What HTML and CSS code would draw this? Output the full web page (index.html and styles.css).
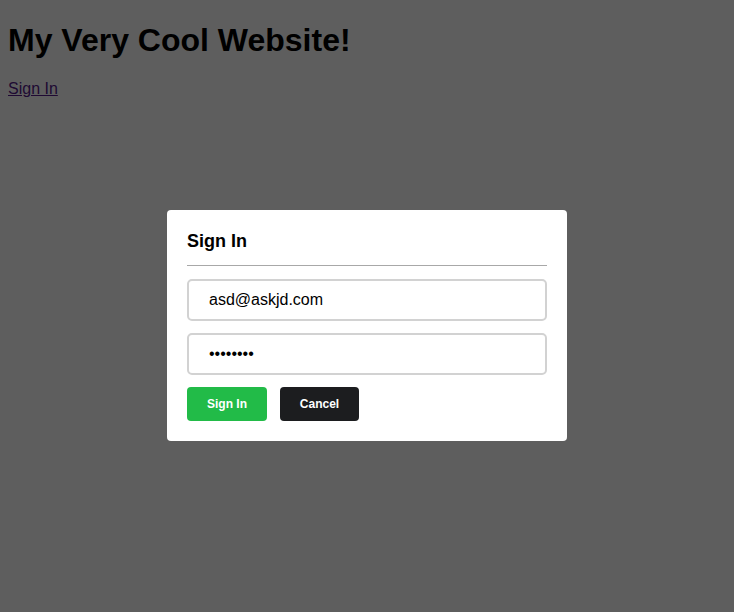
FILE: index.html
```html
<!DOCTYPE html>
<html>
<head>
<meta charset="utf-8">
<link rel="stylesheet" href="styles.css">
</head>
<body>
<h1 class="site-title">My Very Cool Website!</h1>
<p class="nav"><a class="signin-link" href="#">Sign In</a></p>
<div class="overlay">
  <div class="modal">
    <h2 class="modal-title">Sign In</h2>
    <hr class="divider">
    <form class="form">
      <input class="field" type="email" value="asd@askjd.com">
      <input class="field" type="password" value="password">
      <div class="actions">
        <button type="button" class="btn btn-primary">Sign In</button>
        <button type="button" class="btn btn-dark">Cancel</button>
      </div>
    </form>
  </div>
</div>
</body>
</html>
```

FILE: styles.css
```css
html, body {
  height: 100%;
}
body {
  margin: 8px;
  background: #ffffff;
  font-family: "Liberation Sans", Arial, sans-serif;
  color: #000;
}
.site-title {
  font-size: 32px;
  font-weight: bold;
  margin: 14px 0 21px;
}
.nav {
  font-size: 16px;
  margin: 16px 0;
}
.signin-link {
  color: #551a8b;
}
.overlay {
  position: fixed;
  inset: 0;
  background: rgba(0, 0, 0, 0.63);
  display: flex;
  justify-content: center;
  align-items: flex-start;
  padding-top: 210px;
}
.modal {
  width: 400px;
  box-sizing: border-box;
  background: #fff;
  border-radius: 4px;
  padding: 20px;
}
.modal-title {
  font-size: 18px;
  font-weight: bold;
  margin: 0;
  line-height: 22px;
}
.divider {
  border: 0;
  border-top: 1px solid #a8a8a8;
  margin: 13px 0 13px;
  height: 0;
}
.form {
  display: flex;
  flex-direction: column;
  gap: 12px;
}
.field {
  box-sizing: border-box;
  width: 100%;
  height: 42px;
  border: 2px solid #d2d2d2;
  border-radius: 5px;
  padding: 0 20px;
  font-family: "Liberation Sans", Arial, sans-serif;
  font-size: 16px;
  color: #000;
  outline: none;
  margin: 0;
}
.actions {
  display: flex;
  gap: 13px;
}
.btn {
  height: 34px;
  border: 0;
  border-radius: 4px;
  color: #fff;
  font-family: "Liberation Sans", Arial, sans-serif;
  font-weight: bold;
  font-size: 12px;
  padding: 0;
  margin: 0;
}
.btn-primary {
  width: 80px;
  background: #22bb48;
}
.btn-dark {
  width: 79px;
  background: #1c1d1f;
}
```
